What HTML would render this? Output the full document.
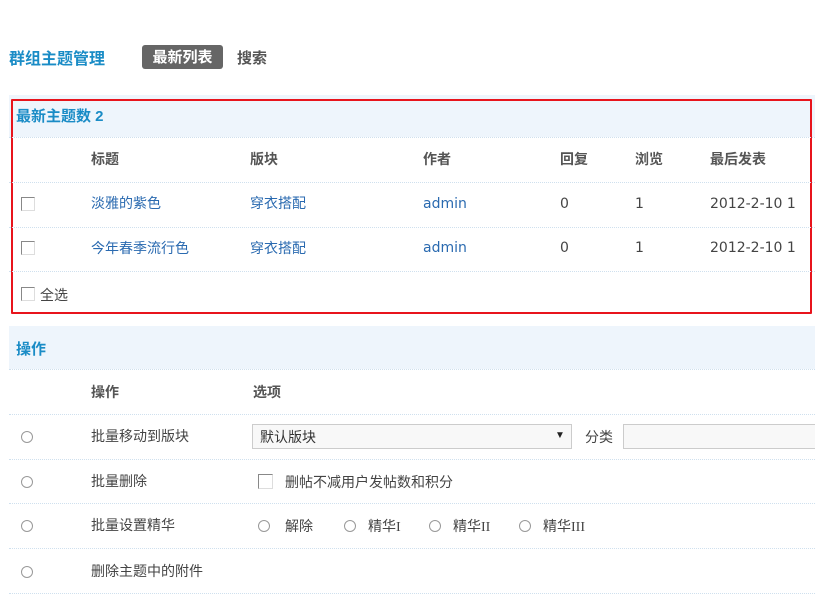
<!DOCTYPE html>
<html><head><meta charset="utf-8"><style>
body{margin:0;width:815px;height:602px;overflow:hidden;background:#fff;font-family:"Liberation Sans","Noto Sans CJK SC",sans-serif;font-size:14px;color:#444;position:relative}
.a{position:absolute;white-space:nowrap}
.hd{position:absolute;left:9px;right:0;background:#eef5fc}
.ln{position:absolute;left:9px;right:0;border-top:1px dotted #cfe0ee}
.b{font-weight:bold;color:#555}
.lk{color:#2a6ab0}
.v{font-family:"DejaVu Sans",sans-serif;font-size:14px}
.t{color:#1a8cc6;font-weight:bold}
.cb{position:absolute;width:12px;height:12px;border:1px solid #888;border-right-color:#ddd;border-bottom-color:#ddd;background:#fff}
.rd{position:absolute;width:10px;height:10px;border:1px solid #999;border-radius:50%;background:#fff}
</style></head><body>
<div class="a t" style="left:9px;top:45px;font-size:16px">群组主题管理</div>
<div class="a" style="left:142px;top:45px;width:81px;height:24px;background:#666;border-radius:3px;color:#fff;font-weight:bold;font-size:15px;line-height:25px;text-align:center">最新列表</div>
<div class="a b" style="left:237px;top:47px;font-size:15px">搜索</div>

<div class="hd" style="top:95px;height:42px"></div>
<div class="a" style="left:11px;top:99px;width:797px;height:211px;border:2px solid #e8141c;border-radius:1px"></div>
<div class="a t" style="left:16px;top:105px;font-size:15px">最新主题数 2</div>
<div class="ln" style="top:137px"></div>
<div class="a b" style="left:91px;top:149px">标题</div>
<div class="a b" style="left:250px;top:149px">版块</div>
<div class="a b" style="left:423px;top:149px">作者</div>
<div class="a b" style="left:560px;top:149px">回复</div>
<div class="a b" style="left:635px;top:149px">浏览</div>
<div class="a b" style="left:710px;top:149px">最后发表</div>
<div class="ln" style="top:182px"></div>
<div class="cb" style="left:21px;top:197px"></div>
<div class="a lk" style="left:91px;top:193px">淡雅的紫色</div>
<div class="a lk" style="left:250px;top:193px">穿衣搭配</div>
<div class="a lk v" style="left:423px;top:196px">admin</div>
<div class="a v" style="left:560px;top:196px">0</div>
<div class="a v" style="left:635px;top:196px">1</div>
<div class="a v" style="left:710px;top:196px">2012-2-10 1</div>
<div class="ln" style="top:227px"></div>
<div class="cb" style="left:21px;top:241px"></div>
<div class="a lk" style="left:91px;top:238px">今年春季流行色</div>
<div class="a lk" style="left:250px;top:238px">穿衣搭配</div>
<div class="a lk v" style="left:423px;top:240px">admin</div>
<div class="a v" style="left:560px;top:240px">0</div>
<div class="a v" style="left:635px;top:240px">1</div>
<div class="a v" style="left:710px;top:240px">2012-2-10 1</div>
<div class="ln" style="top:271px"></div>
<div class="cb" style="left:21px;top:287px"></div>
<div class="a" style="left:40px;top:285px">全选</div>

<div class="hd" style="top:326px;height:43px"></div>
<div class="a t" style="left:16px;top:338px;font-size:15px">操作</div>
<div class="ln" style="top:369px"></div>
<div class="a b" style="left:91px;top:382px">操作</div>
<div class="a b" style="left:253px;top:382px">选项</div>
<div class="ln" style="top:414px"></div>
<div class="rd" style="left:21px;top:431px"></div>
<div class="a" style="left:91px;top:426px">批量移动到版块</div>
<div class="a" style="left:252px;top:424px;width:318px;height:23px;border:1px solid #ccc;background:#f8f8f8"></div>
<div class="a" style="left:260px;top:427px;color:#333">默认版块</div>
<div class="a" style="left:555px;top:430px;font-size:10px;color:#222">▼</div>
<div class="a" style="left:585px;top:427px">分类</div>
<div class="a" style="left:623px;top:424px;width:200px;height:23px;border:1px solid #ccc;background:#f8f8f8"></div>
<div class="ln" style="top:459px"></div>
<div class="rd" style="left:21px;top:476px"></div>
<div class="a" style="left:91px;top:471px">批量删除</div>
<div class="cb" style="left:258px;top:474px;width:13px;height:13px"></div>
<div class="a" style="left:285px;top:472px">删帖不减用户发帖数和积分</div>
<div class="ln" style="top:503px"></div>
<div class="rd" style="left:21px;top:520px"></div>
<div class="a" style="left:91px;top:515px">批量设置精华</div>
<div class="rd" style="left:258px;top:520px"></div>
<div class="a" style="left:285px;top:516px">解除</div>
<div class="rd" style="left:344px;top:520px"></div>
<div class="a" style="left:368px;top:516px">精华<span style="font-family:'Liberation Serif',serif">I</span></div>
<div class="rd" style="left:429px;top:520px"></div>
<div class="a" style="left:453px;top:516px">精华<span style="font-family:'Liberation Serif',serif">II</span></div>
<div class="rd" style="left:519px;top:520px"></div>
<div class="a" style="left:543px;top:516px">精华<span style="font-family:'Liberation Serif',serif">III</span></div>
<div class="ln" style="top:548px"></div>
<div class="rd" style="left:21px;top:566px"></div>
<div class="a" style="left:91px;top:561px">删除主题中的附件</div>
<div class="ln" style="top:593px"></div>
</body></html>
